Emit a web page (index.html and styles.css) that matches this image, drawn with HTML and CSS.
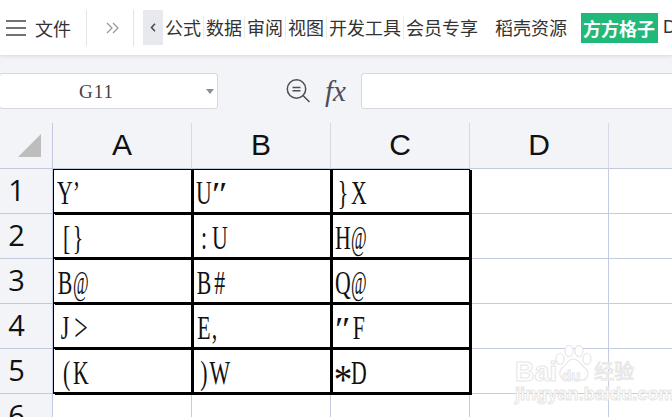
FILE: index.html
```html
<!DOCTYPE html>
<html lang="zh">
<head>
<meta charset="utf-8">
<title>方方格子</title>
<link rel="stylesheet" href="styles.css">
</head>
<body>
<div class="app">
  <header class="toolbar">
    <svg class="menu-icon" width="20" height="16" viewBox="0 0 20 16"><path d="M0 1H20M0 8H20M0 15H20" stroke="#444" stroke-width="1.4" fill="none"/></svg>
    <span class="file">文件</span>
    <i class="tool-sep first"></i>
    <svg class="more-icon" width="13" height="12" viewBox="0 0 13 12"><path d="M1 1L6 6L1 11M7 1L12 6L7 11" stroke="#9a9a9a" stroke-width="1.3" fill="none"/></svg>
    <i class="tool-sep second"></i>
    <span class="back"><svg width="6" height="9" viewBox="0 0 6 9"><path d="M5 .8L1.5 4.5L5 8.2" stroke="#444" stroke-width="1.5" fill="none"/></svg></span>
    <nav class="tabs">
      <span class="tab">公式</span>
      <span class="tab">数据</span>
      <span class="tab">审阅</span>
      <span class="tab">视图</span>
      <span class="tab">开发工具</span>
      <span class="tab plain">会员专享</span>
      <span class="tab plain res">稻壳资源</span>
      <span class="tab-green">方方格子</span>
      <span class="tab-d">D</span>
    </nav>
  </header>
  <section class="formula">
    <div class="namebox"><span class="name">G11</span><i class="caret"></i></div>
    <svg class="zoom-icon" width="26" height="26" viewBox="0 0 26 26"><circle cx="11.5" cy="11" r="9.2" stroke="#4a4f57" stroke-width="1.5" fill="none"/><path d="M18 17.5L24.5 24M7.5 9.5H15.5M7.5 12.8H15.5" stroke="#4a4f57" stroke-width="1.5" fill="none"/></svg>
    <span class="fx">fx</span>
    <div class="input"></div>
  </section>
  <main class="sheet">
    <div class="corner"><i class="tri"></i></div>
    <div class="colh">A</div><div class="colh">B</div><div class="colh">C</div><div class="colh">D</div><div class="colh last"></div>

    <div class="rowh">1</div>
    <div class="cell box"><span class="v"><b class="c">Y</b><b class="c start">’</b></span></div><div class="cell box"><span class="v"><b class="c">U</b><b class="c"><em class="pr">″</em></b></span></div><div class="cell box"><span class="v"><b class="c">}</b><b class="c">X</b></span></div><div class="cell"></div><div class="cell last"></div>

    <div class="rowh">2</div>
    <div class="cell box"><span class="v"><b class="c end shift">[</b><b class="c start">}</b></span></div><div class="cell box"><span class="v"><b class="c">:</b><b class="c">U</b></span></div><div class="cell box"><span class="v"><b class="c">H</b><b class="c"><em class="at">@</em></b></span></div><div class="cell"></div><div class="cell last"></div>

    <div class="rowh">3</div>
    <div class="cell box"><span class="v"><b class="c">B</b><b class="c"><em class="at">@</em></b></span></div><div class="cell box"><span class="v"><b class="c">B</b><b class="c">#</b></span></div><div class="cell box"><span class="v"><b class="c">Q</b><b class="c"><em class="at">@</em></b></span></div><div class="cell"></div><div class="cell last"></div>

    <div class="rowh">4</div>
    <div class="cell box"><span class="v"><b class="c">J</b><b class="c"><em class="gt">&gt;</em></b></span></div><div class="cell box"><span class="v"><b class="c">E</b><b class="c start">,</b></span></div><div class="cell box"><span class="v"><b class="c"><em class="pr">″</em></b><b class="c">F</b></span></div><div class="cell"></div><div class="cell last"></div>

    <div class="rowh">5</div>
    <div class="cell box"><span class="v"><b class="c end shift">(</b><b class="c">K</b></span></div><div class="cell box"><span class="v"><b class="c">)</b><b class="c">W</b></span></div><div class="cell box"><span class="v"><b class="c"><em class="star">*</em></b><b class="c">D</b></span></div><div class="cell"></div><div class="cell last"></div>

    <div class="rowh">6</div>
    <div class="cell"></div><div class="cell"></div><div class="cell"></div><div class="cell"></div><div class="cell last"></div>
    <div class="range"></div>
  </main>
  <div class="mark">
    <svg class="paw" width="38" height="38" viewBox="0 0 38 38"><g fill="#fff" stroke="#e6e6e6" stroke-width="1.2"><ellipse cx="5" cy="14" rx="4" ry="5.5"/><ellipse cx="14" cy="6" rx="4" ry="5.5"/><ellipse cx="24" cy="6" rx="4" ry="5.5"/><ellipse cx="32" cy="14" rx="4" ry="5.5"/><path d="M18 14C13 14 12 19 8 22C3 26 4 35 11 35C14 35 16 34 19 34C22 34 24 35 27 35C33 35 35 27 30 23C25 19 24 14 18 14Z"/></g></svg>
    <span class="mark-bai">Bai</span><span class="mark-du">du</span><span class="mark-jy">经验</span>
    <span class="mark-url">jingyan.baidu.com</span>
  </div>
</div>
</body>
</html>
```
FILE: styles.css
```css
* { box-sizing: border-box; }
html, body { margin: 0; padding: 0; }
body { width: 672px; height: 417px; overflow: hidden; background: #fff; font-family: "Noto Sans CJK SC", "Liberation Sans", sans-serif; color: #333; }
.app { position: relative; width: 672px; height: 417px; overflow: hidden; }

.toolbar { position: relative; z-index: 2; display: flex; align-items: center; height: 55px; padding-left: 6px; background: #fff; box-shadow: 0 1px 4px rgba(0,0,0,.12); white-space: nowrap; }
.menu-icon { flex: none; }
.file { margin-left: 9px; font-size: 18px; line-height: 24px; }
.tool-sep { flex: none; width: 1px; height: 36px; background: #e4e4e4; }
.tool-sep.first { margin-left: 15px; }
.more-icon { flex: none; margin-left: 19px; }
.tool-sep.second { margin-left: 14px; }
.back { flex: none; display: flex; align-items: center; justify-content: center; width: 20px; height: 35px; margin-left: 9px; background: #e7e9ee; }
.tabs { display: flex; align-items: center; margin-left: 2px; }
.tab { padding: 0 2px 0 0; margin-right: 2px; font-size: 18px; line-height: 23px; border-right: 1px solid #ececec; color: #333; }
.tab.plain { border-right: 0; margin-right: 17px; padding: 0; }
.tab.res { margin-right: 14px; }
.tab-green { height: 30px; padding: 0 3px 0 2px; font-size: 18px; line-height: 30px; font-weight: 700; color: #fff; background: #20b97a; }
.tab-d { margin-left: 5px; font-size: 18px; color: #333; font-family: "Liberation Sans", sans-serif; }

.formula { display: flex; align-items: center; height: 68px; padding-top: 3px; background: #f3f4f7; }
.namebox { position: relative; flex: none; width: 219px; height: 36px; margin-left: -1px; background: #fff; border: 1px solid #d5d7dc; border-radius: 3px; text-align: center; }
.name { display: block; padding-right: 24px; font-family: "Liberation Serif", serif; font-size: 19px; letter-spacing: 1px; line-height: 36px; color: #444; }
.caret { position: absolute; right: 3px; top: 15px; width: 0; height: 0; border: 4px solid transparent; border-top: 5px solid #8a8f98; border-bottom: 0; }
.zoom-icon { flex: none; margin-left: 67px; }
.fx { flex: none; width: 36px; margin-left: 14px; font-family: "Liberation Serif", serif; font-style: italic; font-size: 29px; line-height: 30px; color: #4a4f57; }
.input { flex: none; width: 330px; height: 36px; background: #fff; border: 1px solid #d5d7dc; border-radius: 3px; }

.sheet { position: relative; display: grid; grid-template-columns: 53px 139px 139px 139px 139px 63px; grid-template-rows: 46px 45px 45px 45px 45px 45px 45px; background: #fff; }
.corner { position: relative; background: #f3f4f7; border-right: 1px solid #c3cade; border-bottom: 1px solid #c3cade; }
.tri { position: absolute; left: 18px; top: 11px; width: 23px; height: 23px; background: #bdbdbd; clip-path: polygon(100% 0, 100% 100%, 0 100%); }
.colh { display: flex; align-items: center; justify-content: center; padding-bottom: 2px; background: #f3f4f7; border-right: 1px solid #d5d9e6; border-bottom: 1px solid #c3cade; font-family: "Liberation Sans", sans-serif; font-size: 30px; color: #111; }
.colh.last { border-right: 0; }
.rowh { display: flex; align-items: center; justify-content: center; padding: 0 19px 3px 0; background: #f3f4f7; border-right: 1px solid #c3cade; border-bottom: 1px solid #c3cade; font-family: "Open Sans", sans-serif; font-size: 29px; color: #111; }
.cell { border-right: 1px solid #c5cbe0; border-bottom: 1px solid #c5cbe0; }
.cell.last { border-right: 0; }
.box { position: relative; display: flex; align-items: center; padding-left: 4px; border: 0; box-shadow: inset -1px -2px 0 #000, 2px 1px 0 #000; }
.range { position: absolute; grid-area: 2 / 2 / 7 / 5; inset: 0; border-top: 1px solid #000; border-left: 1px solid #000; pointer-events: none; }
.v { display: inline-flex; font-family: "Liberation Serif", serif; font-size: 33px; line-height: 38px; color: #111; transform: scaleX(.66); transform-origin: left center; white-space: nowrap; margin-top: 3px; }
.c { display: inline-flex; justify-content: center; width: 24px; font-weight: 400; }
.c.start { justify-content: flex-start; }
.c.end { justify-content: flex-end; }
.c.shift { margin-left: -4px; margin-right: 4px; }
.at { display: inline-block; font-style: normal; transform: scaleX(.78); }
.gt { display: inline-block; font-style: normal; transform: scale(1.1, 1.2); font-weight: 400; }
.pr { display: inline-block; font-style: normal; transform: translateY(1px) scale(1.7, 1); }
.star { display: inline-block; font-style: normal; transform: translateY(7px) scale(1.7, 1.3); }

.mark { position: absolute; left: 515px; top: 345px; width: 130px; height: 60px; pointer-events: none; }
.paw { position: absolute; left: 40px; top: 0; }
.mark-bai, .mark-du, .mark-jy, .mark-url { position: absolute; color: #fff; -webkit-text-stroke: 1px #e6e6e6; font-family: "Liberation Sans", sans-serif; white-space: nowrap; }
.mark-bai { left: 0; top: 12px; font-size: 27px; font-weight: 700; letter-spacing: 0; }
.mark-du { left: 47px; top: 22px; font-size: 15px; font-weight: 700; }
.mark-jy { left: 79px; top: 11px; font-size: 20px; font-family: "Noto Sans CJK SC", sans-serif; }
.mark-url { left: 0; top: 39px; font-size: 18px; font-weight: 700; letter-spacing: .1px; }
```
